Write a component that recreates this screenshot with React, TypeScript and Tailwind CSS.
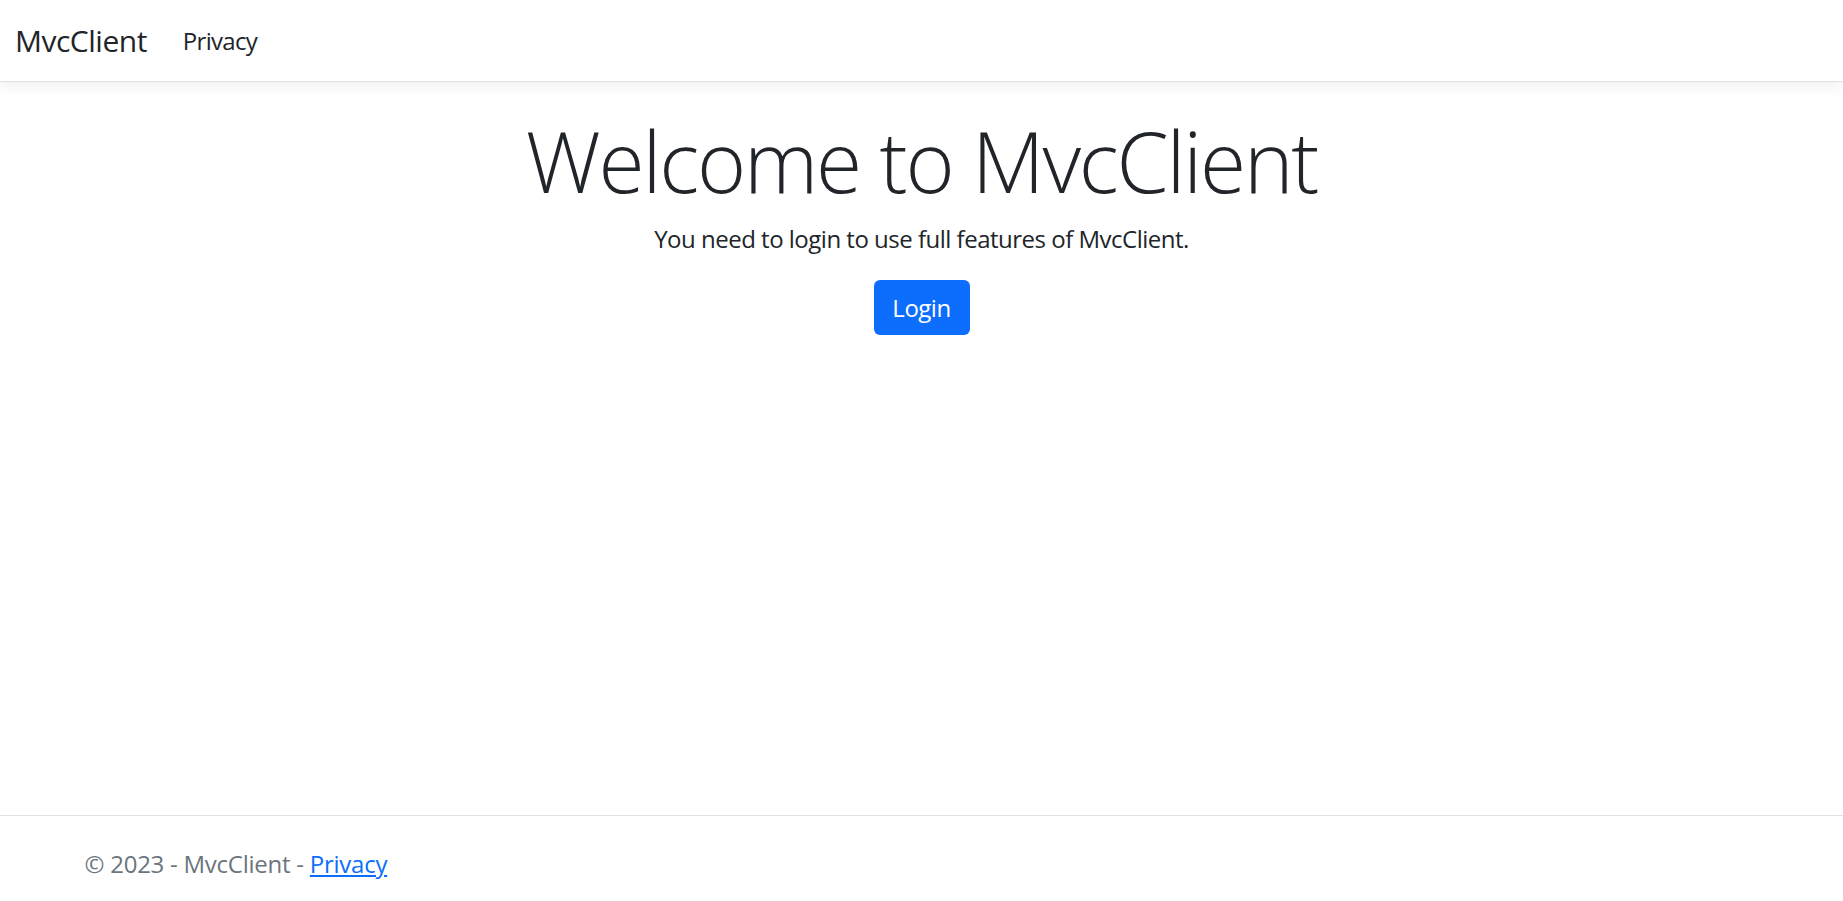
const FONT = "font-['Segoe_UI','Open_Sans','Noto_Sans',sans-serif]";

function Navbar() {
  return (
    <header className="h-[82px] shrink-0 bg-white border-b border-[#dee2e6] shadow-[0_6px_12px_rgba(0,0,0,0.05)] flex items-center">
      <nav className="flex items-center pl-[15px]">
        <a className="text-[30px] leading-[45px] tracking-[-0.5px] text-[#212529] mr-[24px]">MvcClient</a>
        <a className="text-[24px] leading-[36px] tracking-[-0.7px] text-[#212529] px-[12px]">Privacy</a>
      </nav>
    </header>
  );
}

function Main() {
  return (
    <main className="flex-1 pt-[29px]">
      <div className="w-[1710px] mx-auto px-[18px] text-center">
        <h1 className="text-[84px] leading-[100px] tracking-[-2.2px] font-light text-[#212529]">
          Welcome to MvcClient
        </h1>
        <p className="mt-[10px] text-[24px] leading-[36px] tracking-[-0.5px] text-[#212529]">
          You need to login to use full features of MvcClient.
        </p>
        <button className="mt-[23px] h-[55px] w-[96px] rounded-[6px] bg-[#0d6efd] text-white text-[24px] leading-[36px] tracking-[-0.5px]">
          Login
        </button>
      </div>
    </main>
  );
}

function Footer() {
  return (
    <footer className="h-[86px] shrink-0 border-t border-[#dee2e6]">
      <div className="w-[1710px] mx-auto px-[18px] pt-[30px] text-[24px] leading-[36px] tracking-[-0.25px] text-[#6c757d]">
        © 2023 - MvcClient - <a className="text-[#0d6efd] underline">Privacy</a>
      </div>
    </footer>
  );
}

export default function App() {
  return (
    <div className={`h-screen flex flex-col bg-white ${FONT}`}>
      <Navbar />
      <Main />
      <Footer />
    </div>
  );
}
